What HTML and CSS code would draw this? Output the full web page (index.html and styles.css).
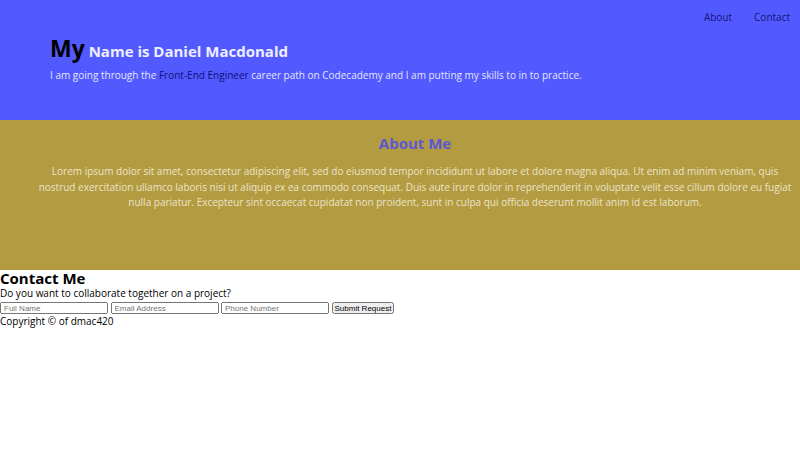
FILE: index.html
```html
<!DOCTYPE html>
<html>
<head>
    <meta charset="UTF-8">
    <meta name="viewport" content="width=device-width, initial-scale=1.0">
    <title>Daniel Macdonald</title>
    <link rel="stylesheet" href="styles.css">
</head>
<body>
    <div class="header">
        <nav class="nav">
            <a href="#about">About</a>
            <a href="#contact">Contact</a>
        </nav>
        <h1><span class="my">My</span> Name is Daniel Macdonald</h1>
        <p>I am going through the <span class="path">Front-End Engineer</span> career path on Codecademy and I am putting my skills to in to practice.</p>
    </div>
    <div class="about" id="about">
        <h2>About Me</h2>
        <p>Lorem ipsum dolor sit amet, consectetur adipiscing elit, sed do eiusmod tempor incididunt ut labore et dolore magna aliqua. Ut enim ad minim veniam, quis nostrud exercitation ullamco laboris nisi ut aliquip ex ea commodo consequat. Duis aute irure dolor in reprehenderit in voluptate velit esse cillum dolore eu fugiat nulla pariatur. Excepteur sint occaecat cupidatat non proident, sunt in culpa qui officia deserunt mollit anim id est laborum.</p>
    </div>
    <div class="contact" id="contact">
        <h3>Contact Me</h3>
        <p>Do you want to collaborate together on a project?</p>
        <form class="contact-form">
            <input type="text" placeholder="Full Name">
            <input type="email" placeholder="Email Address">
            <input type="tel" placeholder="Phone Number">
            <button type="submit">Submit Request</button>
        </form>
        <p>Copyright &copy; of dmac420</p>
    </div>
</body>
</html>
```

FILE: styles.css
```css
body {
    margin: 0;
    padding: 0;
    font-family: "Open Sans", sans-serif;
    font-size: 10px;
}
.header {
    background-color: #525AFF;
    height: 120px;
    padding: 0 10px 0 50px;
    box-sizing: border-box;
    overflow: hidden;
}
.nav {
    display: flex;
    justify-content: flex-end;
    gap: 22px;
    padding-top: 10px;
}
.nav a {
    color: #14147a;
    text-decoration: none;
    font-size: 10px;
}
.header h1 {
    margin: 10px 0 0;
    font-size: 15px;
    color: #eeeeff;
    line-height: 28px;
}
.header h1 .my {
    font-size: 23px;
    color: #000;
}
.header p {
    margin: 3px 0 0;
    color: #e4e4ff;
}
.header .path {
    color: #10107a;
}
.about {
    background-color: #B39B42;
    height: 150px;
    padding: 13px 5px 0 35px;
    box-sizing: border-box;
    text-align: center;
}
.about h2 {
    margin: 0 0 11px;
    font-size: 15px;
    line-height: 20px;
    color: #5b58d4;
}
.about p {
    margin: 0;
    color: #ece4c8;
    line-height: 15.5px;
}
.contact h3 {
    margin: 0;
    font-size: 15px;
    line-height: 16px;
}
.contact p {
    margin: 0;
    line-height: 14px;
}
.contact-form {
    display: flex;
    gap: 2.5px;
    padding: 2px 0 0;
}
.contact-form input {
    width: 108px;
    height: 12px;
    box-sizing: border-box;
    font-size: 8px;
    padding: 0 2px;
    font-family: "Liberation Sans", Arial, sans-serif;
}
.contact-form button {
    height: 12px;
    box-sizing: border-box;
    font-size: 8px;
    padding: 0 1px;
    font-family: "Liberation Sans", Arial, sans-serif;
}
```
